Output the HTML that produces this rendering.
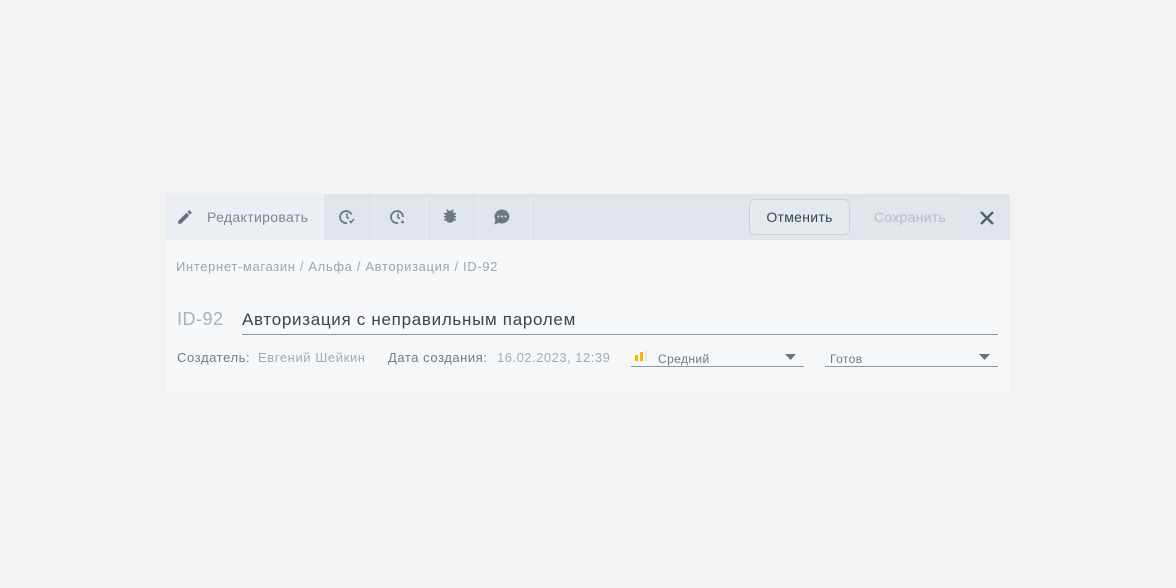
<!DOCTYPE html>
<html><head><meta charset="utf-8"><style>
*{margin:0;padding:0;box-sizing:border-box}
body{width:1176px;height:588px;background:#f2f2f2;font-family:"Liberation Sans","Noto Sans CJK SC",sans-serif;position:relative;overflow:hidden}
.panel{position:absolute;left:166px;top:194px;width:844px;height:199px;background:#f6f7f9}
.hdr{position:absolute;left:0;top:0;width:844px;height:46px;background:#dfe5eb}
.tab1{position:absolute;left:0;top:0;width:158px;height:46px;background:#ebeff3}
.itab{position:absolute;top:0;width:51px;height:46px;border-right:1px solid #e9edf1}
.t{position:absolute;white-space:nowrap}
.btn{position:absolute;left:583px;top:5px;width:101px;height:36px;border:1px solid #c9d1d9;border-radius:6px;background:#e4e9ee;font-size:14px;color:#3a4550;text-align:center;line-height:34px;letter-spacing:0.3px}
.save{position:absolute;left:694px;top:5px;width:100px;height:36px;background:#e1e6eb;font-size:14px;color:#b5bec7;text-align:center;line-height:36px;letter-spacing:0.3px}
</style></head><body>
<div class="panel">
<div class="hdr"></div>
<div class="tab1"></div>
<svg class="t" style="left:10px;top:14px" width="18" height="18" viewBox="0 0 24 24"><path d="M3 17.25V21h3.75L17.8 9.94l-3.75-3.75L3 17.25zM20.7 7.04a1 1 0 0 0 0-1.41l-2.34-2.34a1 1 0 0 0-1.41 0l-1.83 1.83 3.75 3.75 1.83-1.83z" fill="#66717c"/></svg>
<div class="t" style="left:41px;top:15px;font-size:14px;color:#7b8793;letter-spacing:0.35px">Редактировать</div>
<div class="itab" style="left:158px"></div>
<div class="itab" style="left:210px"></div>
<div class="itab" style="left:262px"></div>
<div class="itab" style="left:314px"></div>
<svg class="t" style="left:172px;top:14px" width="18" height="18" viewBox="0 0 18 18"><path d="M13.5 6.5A6 6 0 1 0 9 15" fill="none" stroke="#6d7883" stroke-width="1.8"/><path d="M9 5.5v4l2 1" fill="none" stroke="#6d7883" stroke-width="1.6"/><path d="M11.5 13l1.5 1.5 3-3.5" fill="none" stroke="#6d7883" stroke-width="1.6"/></svg>
<svg class="t" style="left:223px;top:14px" width="18" height="18" viewBox="0 0 18 18"><path d="M14 9A6 6 0 1 0 9 15" fill="none" stroke="#6d7883" stroke-width="1.8"/><path d="M9 5.5v4l2 1" fill="none" stroke="#6d7883" stroke-width="1.6"/><circle cx="13.5" cy="14" r="1.4" fill="#6d7883"/></svg>
<svg class="t" style="left:275px;top:13px" width="18" height="18" viewBox="0 0 24 24"><path d="M20 8h-2.8a6 6 0 0 0-1.8-1.96L17 4.4 15.6 3l-2.2 2.2a6 6 0 0 0-2.8 0L8.4 3 7 4.4l1.6 1.64A6 6 0 0 0 6.8 8H4v2h2.1c-.1.3-.1.7-.1 1v1H4v2h2v1c0 .3 0 .7.1 1H4v2h2.8A6 6 0 0 0 12 21a6 6 0 0 0 5.2-3H20v-2h-2.1c.1-.3.1-.7.1-1v-1h2v-2h-2v-1c0-.3 0-.7-.1-1H20V8z" fill="#6d7883"/></svg>
<svg class="t" style="left:327px;top:14px" width="18" height="18" viewBox="0 0 18 18"><path d="M9 1.5a7.5 7 0 0 0-6.5 10.5L1.5 16.5l4.3-1.6A7.5 7 0 1 0 9 1.5z" fill="#6d7883"/><circle cx="5.5" cy="8.5" r="1" fill="#e0e5ea"/><circle cx="9" cy="8.5" r="1" fill="#e0e5ea"/><circle cx="12.5" cy="8.5" r="1" fill="#e0e5ea"/></svg>
<div class="btn">Отменить</div>
<div class="save">Сохранить</div>
<svg class="t" style="left:813px;top:16px" width="16" height="16" viewBox="0 0 16 16"><path d="M2 2L14 14M14 2L2 14" stroke="#56616c" stroke-width="2.4"/></svg>
<div class="t" style="left:10px;top:65px;font-size:13px;color:#9ba6b1;letter-spacing:0.65px">Интернет-магазин / Альфа / Авторизация / ID-92</div>
<div class="t" style="left:11px;top:115px;font-size:18px;color:#a8b3be;letter-spacing:0.5px">ID-92</div>
<div class="t" style="left:76px;top:116px;font-size:17px;color:#3b444d;letter-spacing:0.7px">Авторизация с неправильным паролем</div>
<div class="t" style="left:76px;top:140px;width:756px;height:1px;background:#8f969d"></div>
<div class="t" style="left:11px;top:156px;font-size:13px;color:#6f7b87;letter-spacing:0.6px">Создатель:</div>
<div class="t" style="left:92px;top:156px;font-size:13px;color:#a0abb6;letter-spacing:0.6px">Евгений Шейкин</div>
<div class="t" style="left:222px;top:156px;font-size:13px;color:#6f7b87;letter-spacing:0.55px">Дата создания:</div>
<div class="t" style="left:331px;top:156px;font-size:13px;color:#a0abb6;letter-spacing:0.5px">16.02.2023, 12:39</div>
<svg class="t" style="left:469px;top:156px" width="14" height="12" viewBox="0 0 14 12"><rect x="0" y="5" width="3" height="6" fill="#f5b800"/><rect x="5" y="2" width="3" height="9" fill="#f5b800"/><rect x="10" y="0" width="2" height="11" fill="#e3e6ea"/></svg>
<div class="t" style="left:492px;top:158px;font-size:12px;color:#6f7b87;letter-spacing:0.4px">Средний</div>
<svg class="t" style="left:619px;top:160px" width="11" height="6"><path d="M0 0h11L5.5 6z" fill="#6b747d"/></svg>
<div class="t" style="left:465px;top:172px;width:173px;height:1px;background:#8f969d"></div>
<div class="t" style="left:664px;top:158px;font-size:12px;color:#6f7b87;letter-spacing:0.4px">Готов</div>
<svg class="t" style="left:813px;top:160px" width="11" height="6"><path d="M0 0h11L5.5 6z" fill="#6b747d"/></svg>
<div class="t" style="left:659px;top:172px;width:173px;height:1px;background:#8f969d"></div>
</div>
</body></html>
